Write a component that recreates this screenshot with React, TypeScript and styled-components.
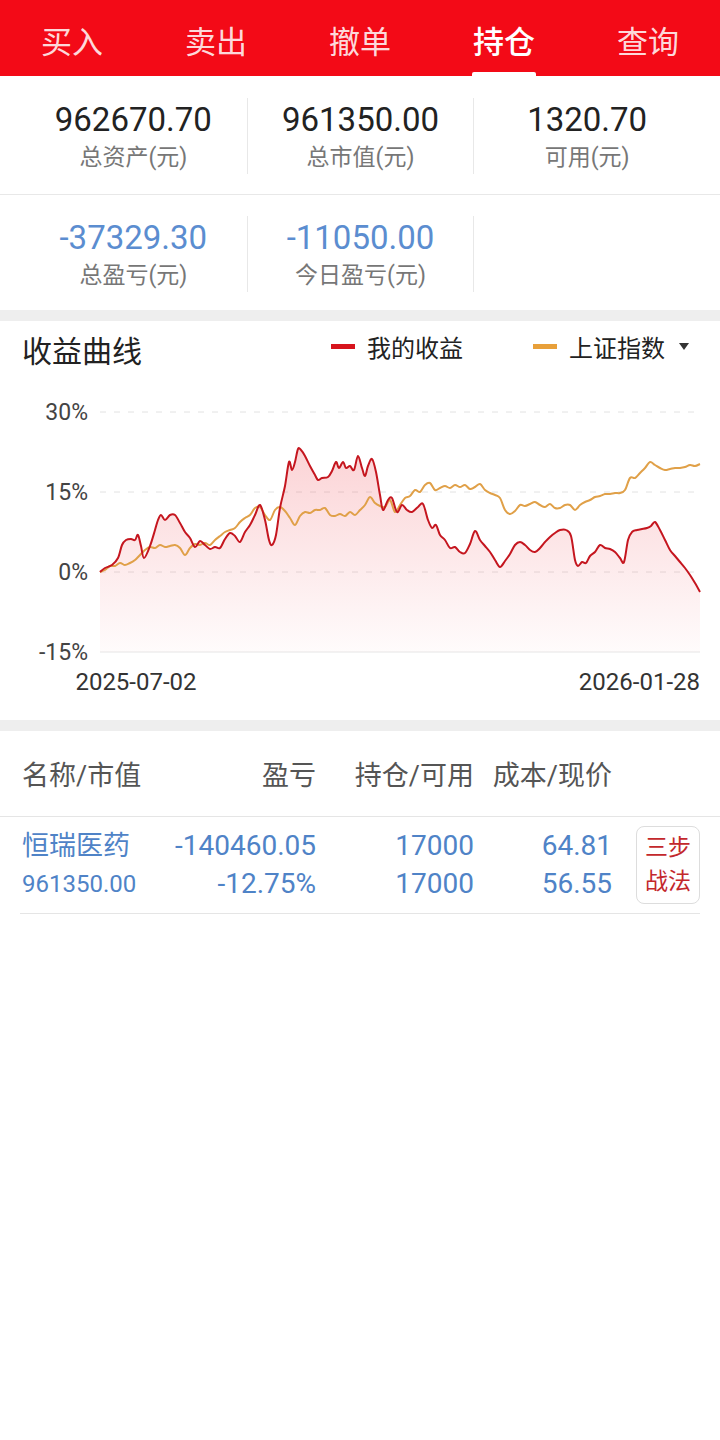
import { createGlobalStyle, styled } from "styled-components";

const GlobalStyle = createGlobalStyle`
  body {
    margin: 0;
    background: #ffffff;
    font-family: "Roboto", "Noto Sans CJK SC", sans-serif;
    color: #222;
  }
`;

const FONT = `"Roboto", "Noto Sans CJK SC", sans-serif`;

const Page = styled.div`
  width: 720px;
  min-height: 1440px;
  background: #fff;
`;

const TabBar = styled.div`
  height: 76px;
  background: #f30a17;
  display: grid;
  grid-template-columns: repeat(5, 1fr);
`;

const Tab = styled.div<{ $active?: boolean }>`
  position: relative;
  display: flex;
  align-items: center;
  justify-content: center;
  padding-top: 2px;
  font-size: 31px;
  font-weight: ${(p) => (p.$active ? 500 : 400)};
  color: ${(p) => (p.$active ? "#fff" : "rgba(255,255,255,0.86)")};

  &::after {
    content: "";
    display: ${(p) => (p.$active ? "block" : "none")};
    position: absolute;
    bottom: 0;
    left: 50%;
    width: 64px;
    height: 4px;
    margin-left: -32px;
    border-radius: 2px 2px 0 0;
    background: #fff;
  }
`;

const StatRow = styled.div<{ $last?: boolean }>`
  display: grid;
  grid-template-columns: repeat(3, 1fr);
  padding: ${(p) => (p.$last ? "21px 20px 18px" : "22px 20px 20px")};
  border-bottom: ${(p) => (p.$last ? "none" : "1px solid #e8e8e8")};
`;

const StatCell = styled.div<{ $first?: boolean }>`
  display: flex;
  flex-direction: column;
  align-items: center;
  height: 76px;
  border-left: ${(p) => (p.$first ? "none" : "1px solid #e8e8e8")};
`;

const StatValue = styled.div<{ $neg?: boolean }>`
  font-size: 33px;
  line-height: 44px;
  color: ${(p) => (p.$neg ? "#5b8dd0" : "#222")};
`;

const StatLabel = styled.div`
  font-size: 23px;
  line-height: 32px;
  color: #777;
`;

const Band = styled.div`
  height: 11px;
  background: #eeeeee;
`;

const ChartSection = styled.div`
  padding-top: 10px;
`;

const ChartHead = styled.div`
  display: flex;
  align-items: center;
  height: 36px;
  padding: 0 31px 0 22px;
`;

const ChartTitle = styled.div`
  font-size: 30px;
  color: #222;
  flex: 1;
`;

const Legend = styled.div<{ $gap: number }>`
  display: flex;
  align-items: center;
  gap: 12px;
  padding-bottom: 6px;
  font-size: 24px;
  color: #222;
  margin-left: ${(p) => p.$gap}px;
`;

const Swatch = styled.span<{ $color: string }>`
  display: inline-block;
  width: 24px;
  height: 5px;
  background: ${(p) => p.$color};
`;

const Caret = styled.span`
  display: inline-block;
  width: 0;
  height: 0;
  margin-left: 2px;
  border-left: 5px solid transparent;
  border-right: 5px solid transparent;
  border-top: 7px solid #333;
`;

const ChartSvg = styled.svg`
  display: block;
  margin-top: 23px;
  font-family: ${FONT};
`;

const Table = styled.div`
  display: grid;
  grid-template-columns: 170px 146px 158px 138px 1fr;
`;

const HeadCell = styled.div<{ $right?: boolean }>`
  height: 85px;
  display: flex;
  align-items: center;
  justify-content: ${(p) => (p.$right ? "flex-end" : "flex-start")};
  padding-left: ${(p) => (p.$right ? "0" : "22px")};
  font-size: 27px;
  color: #555;
  border-bottom: 1px solid #e5e5e5;
  white-space: nowrap;
`;

const DataCell = styled.div<{ $right?: boolean; $first?: boolean }>`
  display: flex;
  flex-direction: column;
  justify-content: center;
  align-items: ${(p) => (p.$right ? "flex-end" : "flex-start")};
  margin-left: ${(p) => (p.$first ? "20px" : "0")};
  padding-left: ${(p) => (p.$first ? "2px" : "0")};
  height: 96px;
  border-bottom: 1px solid #e5e5e5;
  color: #4f83c7;
  white-space: nowrap;
`;

const Line = styled.div<{ $size: number }>`
  font-size: ${(p) => p.$size}px;
  line-height: 38px;
`;

const ActionCell = styled.div`
  display: flex;
  align-items: center;
  justify-content: flex-end;
  margin-right: 20px;
  height: 96px;
  border-bottom: 1px solid #e5e5e5;
`;

const StrategyButton = styled.div`
  width: 64px;
  height: 78px;
  box-sizing: border-box;
  border: 1px solid #dddddd;
  border-radius: 8px;
  display: flex;
  align-items: center;
  justify-content: center;
  text-align: center;
  font-size: 23px;
  line-height: 34px;
  color: #c3282c;
`;

const redPts: [number, number][] = [
  [100, 572], [105, 568], [112, 565], [118, 558], [122, 545], [126, 540], [131, 539], [135, 540], [138, 535], [141, 546], [144, 558],
  [150, 546], [155, 530], [158, 520], [161, 515], [165, 520], [170, 515], [175, 515], [180, 523], [185, 532], [190, 538],
  [195, 547], [200, 541], [205, 545], [210, 549], [215, 547], [220, 548], [225, 539], [230, 533], [235, 536], [240, 542],
  [245, 532], [250, 525], [255, 515], [260, 505], [265, 520], [269, 540], [272, 545], [276, 535], [280, 508], [285, 486],
  [289, 462], [292, 470], [295, 462], [298, 449], [301, 450], [305, 456], [310, 466], [315, 475], [318, 480], [322, 478],
  [328, 477], [332, 471], [336, 462], [339, 468], [343, 462], [346, 468], [350, 466], [354, 470], [358, 456], [362, 468],
  [365, 476], [368, 466], [372, 459], [376, 472], [380, 495], [383, 510], [388, 500], [392, 498], [397, 512], [402, 505],
  [407, 510], [412, 512], [418, 507], [423, 504], [428, 520], [432, 528], [436, 525], [440, 535], [445, 540], [450, 548],
  [455, 547], [460, 552], [465, 553], [470, 544], [475, 531], [480, 540], [485, 546], [490, 552], [495, 560], [500, 567],
  [505, 561], [510, 554], [515, 545], [520, 542], [525, 545], [530, 550], [535, 552], [540, 548], [545, 542], [550, 537],
  [555, 533], [560, 530], [566, 530], [571, 536], [575, 560], [578, 566], [582, 562], [586, 563], [590, 556], [595, 552],
  [600, 545], [605, 548], [610, 549], [615, 552], [620, 558], [624, 562], [628, 540], [632, 532], [637, 530], [642, 529],
  [647, 528], [651, 526], [655, 522], [660, 530], [665, 540], [670, 550], [675, 556], [680, 562], [685, 568], [690, 575],
  [695, 583], [700, 592],
];

const orangePts: [number, number][] = [
  [100, 572], [105, 570], [110, 566], [115, 566], [120, 563], [125, 565], [130, 563], [135, 560], [140, 555], [145, 550],
  [150, 547], [155, 548], [160, 545], [165, 547], [170, 546], [175, 545], [180, 548], [185, 555], [190, 548], [195, 544],
  [200, 545], [205, 543], [210, 545], [215, 540], [220, 536], [225, 532], [230, 530], [235, 528], [240, 522], [245, 518],
  [250, 515], [255, 508], [260, 507], [265, 515], [270, 520], [275, 510], [280, 507], [285, 511], [290, 518], [295, 525],
  [300, 516], [305, 512], [310, 513], [315, 510], [320, 510], [325, 508], [330, 515], [335, 516], [340, 514], [345, 516],
  [350, 512], [355, 515], [360, 510], [365, 505], [370, 497], [375, 503], [380, 506], [385, 507], [390, 500], [395, 512],
  [400, 505], [405, 498], [410, 496], [415, 490], [420, 492], [425, 485], [430, 483], [435, 490], [440, 488], [445, 486],
  [450, 488], [455, 485], [460, 487], [465, 485], [470, 489], [475, 487], [480, 484], [485, 490], [490, 493], [495, 495],
  [500, 498], [505, 510], [510, 514], [515, 511], [520, 505], [525, 506], [530, 504], [535, 502], [540, 505], [545, 507],
  [550, 504], [555, 508], [560, 508], [565, 505], [570, 505], [575, 510], [580, 505], [585, 502], [590, 500], [595, 497],
  [600, 496], [605, 494], [610, 494], [615, 493], [620, 493], [625, 490], [630, 478], [635, 478], [640, 473], [645, 468],
  [650, 462], [655, 465], [660, 468], [665, 470], [670, 469], [675, 468], [680, 468], [685, 467], [690, 465], [695, 466],
  [700, 464],
];

// catmull-rom -> cubic bezier so the curve looks smooth
const smoothPath = (pts: [number, number][]) => {
  let d = `M${pts[0][0]},${pts[0][1]}`;
  for (let i = 0; i < pts.length - 1; i++) {
    const p0 = pts[i - 1] || pts[i];
    const p1 = pts[i];
    const p2 = pts[i + 1];
    const p3 = pts[i + 2] || p2;
    const c1x = p1[0] + (p2[0] - p0[0]) / 6;
    const c1y = p1[1] + (p2[1] - p0[1]) / 6;
    const c2x = p2[0] - (p3[0] - p1[0]) / 6;
    const c2y = p2[1] - (p3[1] - p1[1]) / 6;
    d += ` C${c1x.toFixed(1)},${c1y.toFixed(1)} ${c2x.toFixed(1)},${c2y.toFixed(1)} ${p2[0]},${p2[1]}`;
  }
  return d;
};

const gridRows = [
  { y: 412, label: "30%" },
  { y: 492, label: "15%" },
  { y: 572, label: "0%" },
  { y: 652, label: "-15%" },
];

const tabs = ["买入", "卖出", "撤单", "持仓", "查询"];

const App = (): React.ReactElement => {
  const redD = smoothPath(redPts);
  const fillD = `${redD} L700,652 L100,652 Z`;
  const orangeD = smoothPath(orangePts);

  return (
    <Page>
      <GlobalStyle />
      <TabBar>
        {tabs.map((t) => (
          <Tab key={t} $active={t === "持仓"}>
            {t}
          </Tab>
        ))}
      </TabBar>

      <StatRow>
        <StatCell $first>
          <StatValue>962670.70</StatValue>
          <StatLabel>总资产(元)</StatLabel>
        </StatCell>
        <StatCell>
          <StatValue>961350.00</StatValue>
          <StatLabel>总市值(元)</StatLabel>
        </StatCell>
        <StatCell>
          <StatValue>1320.70</StatValue>
          <StatLabel>可用(元)</StatLabel>
        </StatCell>
      </StatRow>
      <StatRow $last>
        <StatCell $first>
          <StatValue $neg>-37329.30</StatValue>
          <StatLabel>总盈亏(元)</StatLabel>
        </StatCell>
        <StatCell>
          <StatValue $neg>-11050.00</StatValue>
          <StatLabel>今日盈亏(元)</StatLabel>
        </StatCell>
        <StatCell />
      </StatRow>
      <Band />

      <ChartSection>
        <ChartHead>
          <ChartTitle>收益曲线</ChartTitle>
          <Legend $gap={0}>
            <Swatch $color="#d7141d" />
            我的收益
          </Legend>
          <Legend $gap={70}>
            <Swatch $color="#e8a03a" />
            上证指数
            <Caret />
          </Legend>
        </ChartHead>
        <ChartSvg width={720} height={330} viewBox="0 390 720 330">
          <defs>
            <linearGradient id="redFill" x1="0" y1="448" x2="0" y2="652" gradientUnits="userSpaceOnUse">
              <stop offset="0" stopColor="#f0505a" stopOpacity={0.25} />
              <stop offset="1" stopColor="#f0505a" stopOpacity={0.02} />
            </linearGradient>
          </defs>
          {gridRows.map((r, i) => (
            <g key={r.label}>
              <line
                x1={100}
                x2={700}
                y1={r.y}
                y2={r.y}
                stroke={i === 3 ? "#e6e6e6" : "#e2e2e2"}
                strokeWidth={1}
                strokeDasharray={i === 3 ? undefined : "6 8"}
              />
              <text x={88} y={r.y + 8} textAnchor="end" fontSize={23} fill="#444">
                {r.label}
              </text>
            </g>
          ))}
          <path d={fillD} fill="url(#redFill)" />
          <path d={orangeD} fill="none" stroke="#e0a048" strokeWidth={2} strokeLinejoin="round" />
          <path d={redD} fill="none" stroke="#c5161f" strokeWidth={2} strokeLinejoin="round" />
          <text x={136} y={690} textAnchor="middle" fontSize={24} fill="#333">
            2025-07-02
          </text>
          <text x={700} y={690} textAnchor="end" fontSize={24} fill="#333">
            2026-01-28
          </text>
        </ChartSvg>
      </ChartSection>
      <Band />

      <Table>
        <HeadCell>名称/市值</HeadCell>
        <HeadCell $right>盈亏</HeadCell>
        <HeadCell $right>持仓/可用</HeadCell>
        <HeadCell $right>成本/现价</HeadCell>
        <HeadCell />

        <DataCell $first>
          <Line $size={27}>恒瑞医药</Line>
          <Line $size={24}>961350.00</Line>
        </DataCell>
        <DataCell $right>
          <Line $size={28}>-140460.05</Line>
          <Line $size={28}>-12.75%</Line>
        </DataCell>
        <DataCell $right>
          <Line $size={28}>17000</Line>
          <Line $size={28}>17000</Line>
        </DataCell>
        <DataCell $right>
          <Line $size={28}>64.81</Line>
          <Line $size={28}>56.55</Line>
        </DataCell>
        <ActionCell>
          <StrategyButton>
            三步
            <br />
            战法
          </StrategyButton>
        </ActionCell>
      </Table>
    </Page>
  );
};

export default App;
